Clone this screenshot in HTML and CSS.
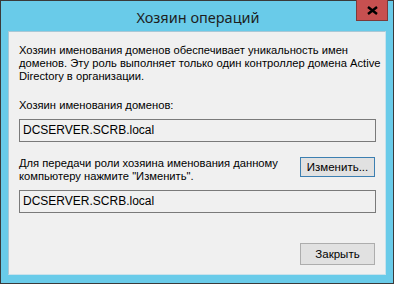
FILE: index.html
```html
<!DOCTYPE html>
<html lang="ru">
<head>
<meta charset="utf-8">
<title>Хозяин операций</title>
<link rel="stylesheet" href="styles.css">
</head>
<body>
<div class="window">
  <div class="titlebar">
    <div class="title">Хозяин операций</div>
    <div class="close"><svg width="11" height="9" viewBox="0 0 11 9"><path d="M1 1 L10 8 M10 1 L1 8" stroke="#000" stroke-width="2.4" fill="none"/></svg></div>
  </div>
  <div class="client">
    <p class="desc">Хозяин именования доменов обеспечивает уникальность имен<br>доменов. Эту роль выполняет только один контроллер домена Active<br>Directory в организации.</p>
    <div class="label">Хозяин именования доменов:</div>
    <div class="field">DCSERVER.SCRB.local</div>
    <div class="row">
      <div class="label2">Для передачи роли хозяина именования данному<br>компьютеру нажмите "Изменить".</div>
      <button class="btn btn-default">Изменить...</button>
    </div>
    <div class="field">DCSERVER.SCRB.local</div>
    <div class="footer">
      <button class="btn">Закрыть</button>
    </div>
  </div>
</div>
</body>
</html>
```
FILE: styles.css
```css
html, body {
  margin: 0;
  padding: 0;
  background: #69cbe9;
}
.window {
  box-sizing: border-box;
  width: 394px;
  height: 284px;
  border: 1px solid #3a3a3a;
  background: #69cbe9;
  padding: 0 7px 8px 7px;
  display: flex;
  flex-direction: column;
  position: relative;
}
.titlebar {
  height: 30px;
  flex: none;
  display: flex;
  align-items: center;
  justify-content: center;
}
.title {
  font-family: "Noto Sans", sans-serif;
  font-size: 14.5px;
  color: #1e1e1e;
  margin-top: 2px;
  margin-left: 2px;
}
.close {
  position: absolute;
  top: -1px;
  right: 5px;
  width: 30px;
  height: 20px;
  background: #c75050;
  border: 1px solid #7c3a3a;
  border-top: none;
  display: flex;
  align-items: center;
  justify-content: center;
}
.client {
  flex: 1;
  background: #f0f0f0;
  border: 1px solid #a9c8d6;
  border-right-color: #c9e2ec;
  border-bottom-color: #c9e2ec;
  padding: 12px 9px 0 10px;
  font-family: "Liberation Sans", sans-serif;
  font-size: 11.2px;
  color: #000;
  display: flex;
  flex-direction: column;
  white-space: nowrap;
}
.desc {
  margin: 0;
  line-height: 13px;
}
.label {
  margin-top: 16px;
  line-height: 13px;
}
.field {
  margin-top: 7px;
  height: 21px;
  border: 1px solid #7a7a7a;
  padding: 0 3px;
  line-height: 21px;
  font-size: 12px;
}
.row {
  display: flex;
  justify-content: space-between;
  align-items: flex-start;
  margin-top: 15px;
}
.label2 {
  line-height: 13px;
}
.btn {
  width: 75px;
  height: 20px;
  margin: 0;
  padding: 0;
  background: #e1e1e1;
  border: 1px solid #adadad;
  font-family: "Liberation Sans", sans-serif;
  font-size: 11.5px;
  color: #000;
}
.btn-default {
  border-color: #3c7fb1;
  margin-right: 1px;
}
.row + .field {
  margin-top: 7px;
}
.footer {
  margin-top: 30px;
  display: flex;
  justify-content: flex-end;
  padding-right: 1px;
}
.footer .btn {
  height: 22px;
}
```
